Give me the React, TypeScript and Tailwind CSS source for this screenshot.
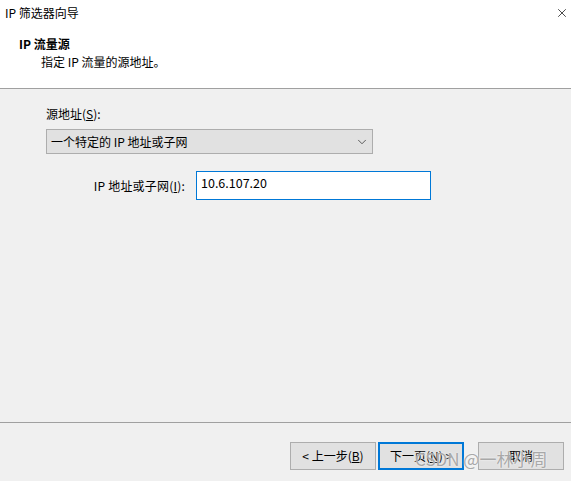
import { ChevronDown, X } from 'lucide-react';

const font = { fontFamily: '"Noto Sans CJK SC", "Noto Sans", sans-serif' };

export default function App() {
  return (
    <div className="relative w-[571px] h-[481px] bg-[#f0f0f0] text-[12px] text-black overflow-hidden flex flex-col" style={font}>
      {/* Title + header */}
      <div className="bg-white h-[88px] flex flex-col">
        <div className="h-[25px] flex items-center justify-between pl-[5px] pr-[2px]">
          <span className="leading-none">IP 筛选器向导</span>
          <X className="w-[14px] h-[14px] text-black" strokeWidth={1.2} />
        </div>
        <div className="pl-[19px] pt-[11px] font-bold leading-[16px]">IP 流量源</div>
        <div className="pl-[41px] pt-[2px] leading-[16px]">指定 IP 流量的源地址。</div>
      </div>
      <div className="h-[1px] bg-[#a0a0a0]" />

      {/* Body */}
      <div className="flex-1 flex flex-col pl-[46px] pt-[17px]">
        <div className="leading-[16px]">
          源地址(<span className="underline">S</span>):
        </div>
        <div className="mt-[7px] w-[327px] h-[25px] bg-[#e1e1e1] border border-[#adadad] flex items-center justify-between pl-[4px] pr-[3px]">
          <span>一个特定的 IP 地址或子网</span>
          <ChevronDown className="w-[14px] h-[14px] text-[#222]" strokeWidth={1.2} />
        </div>
        <div className="mt-[17px] flex items-center">
          <div className="w-[150px] text-right pr-[11px] tracking-[0.2px]">
            IP 地址或子网(<span className="underline">I</span>):
          </div>
          <div className="w-[235px] h-[29px] bg-white border border-[#0078d7] pl-[4px] pt-[3px] leading-[16px] text-[12.5px]">
            10.6.107.20
          </div>
        </div>
      </div>

      {/* Footer */}
      <div className="h-[1px] bg-[#a0a0a0]" />
      <div className="h-[58px] flex justify-end items-start pt-[19px] pr-[7px]">
        <button className="w-[86px] h-[28px] bg-[#e1e1e1] border border-[#adadad] flex items-center justify-center">
          &lt; 上一步(<span className="underline">B</span>)
        </button>
        <button className="ml-[2px] w-[86px] h-[28px] bg-[#e1e1e1] border-2 border-[#0078d7] flex items-center justify-center">
          下一页(<span className="underline">N</span>) &gt;
        </button>
        <button className="ml-[14px] w-[86px] h-[28px] bg-[#e1e1e1] border border-[#adadad] flex items-center justify-center">
          取消
        </button>
      </div>

      {/* Watermark */}
      <div className="absolute left-[415px] top-[447px] text-[17px] leading-[24px] text-[#a8a8a8] [text-shadow:0_0_2px_#ffffff] pointer-events-none whitespace-nowrap">
        CSDN @一林小周
      </div>
    </div>
  );
}
